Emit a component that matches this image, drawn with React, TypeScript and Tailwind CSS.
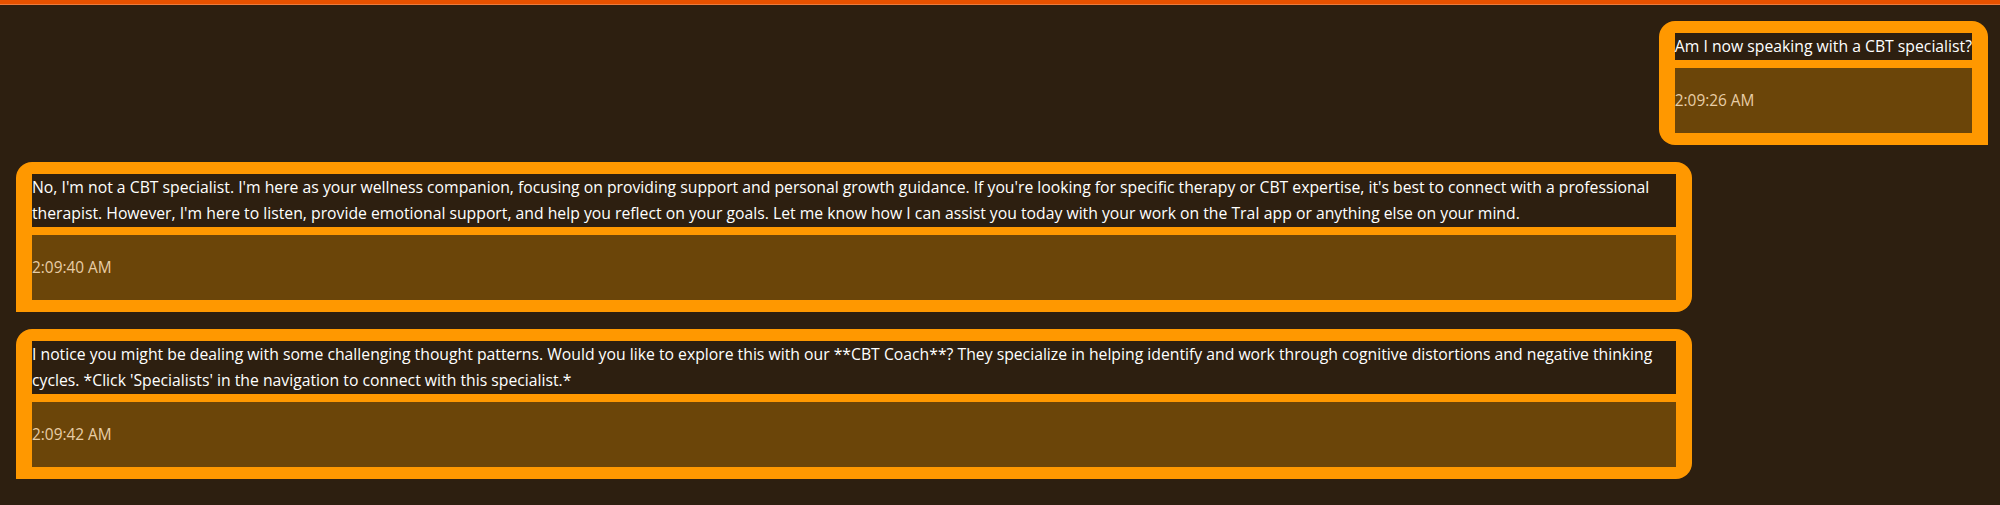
import React from 'react';

interface Message {
  id: string;
  sender: 'user' | 'ai';
  text: string;
  time: string;
}

const messages: Message[] = [
  {
    id: '1',
    sender: 'user',
    text: 'Am I now speaking with a CBT specialist?',
    time: '2:09:26 AM',
  },
  {
    id: '2',
    sender: 'ai',
    text: "No, I'm not a CBT specialist. I'm here as your wellness companion, focusing on providing support and personal growth guidance. If you're looking for specific therapy or CBT expertise, it's best to connect with a professional therapist. However, I'm here to listen, provide emotional support, and help you reflect on your goals. Let me know how I can assist you today with your work on the TraI app or anything else on your mind.",
    time: '2:09:40 AM',
  },
  {
    id: '3',
    sender: 'ai',
    text: "I notice you might be dealing with some challenging thought patterns. Would you like to explore this with our **CBT Coach**? They specialize in helping identify and work through cognitive distortions and negative thinking cycles. *Click 'Specialists' in the navigation to connect with this specialist.*",
    time: '2:09:42 AM',
  },
];

function MessageBubble({ message }: { message: Message }) {
  const isUser = message.sender === 'user';

  return (
    <div className={isUser ? 'flex justify-end' : 'flex justify-start'}>
      <div
        className={
          isUser
            ? 'max-w-[85%] rounded-2xl rounded-br-none bg-[#ff9800] px-4 pt-3 pb-3'
            : 'max-w-[85%] rounded-2xl rounded-bl-none bg-[#ff9800] px-4 pt-3 pb-3'
        }
      >
        <p className="bg-[#2d1f10] text-[15.75px] leading-[26.5px] text-white">{message.text}</p>
        <div className="mt-2 bg-[#6b4509] py-[21px] text-[15.4px] leading-[23.5px] text-[#e8cda6]">
          {message.time}
        </div>
      </div>
    </div>
  );
}

export default function App() {
  return (
    <div className="min-h-[505px] bg-[#2d1f10] font-['Open_Sans',sans-serif]">
      {/* Top accent bar */}
      <div className="h-1 bg-[#e65100]" />
      <div className="h-px bg-[#ec7a3c]" />

      {/* Message list */}
      <div className="flex flex-col gap-[16.5px] pt-4 pr-3 pb-6 pl-4">
        {messages.map((message) => (
          <MessageBubble key={message.id} message={message} />
        ))}
      </div>
    </div>
  );
}
